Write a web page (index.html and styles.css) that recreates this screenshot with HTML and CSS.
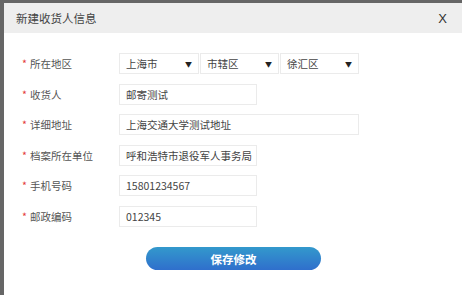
FILE: index.html
```html
<!DOCTYPE html>
<html lang="zh-CN">
<head>
    <meta charset="UTF-8">
    <title>新建收货人信息</title>
    <link rel="stylesheet" href="styles.css">
</head>
<body>
    <div class="modal">
        <div class="modal-header">
            <span class="modal-title">新建收货人信息</span>
            <span class="modal-close">X</span>
        </div>
        <form class="modal-body">
            <div class="form-row">
                <label><i>*</i>所在地区</label>
                <div class="selects">
                    <div class="select w80">上海市<b>▼</b></div>
                    <div class="select w78">市辖区<b>▼</b></div>
                    <div class="select w79">徐汇区<b>▼</b></div>
                </div>
            </div>
            <div class="form-row">
                <label><i>*</i>收货人</label>
                <div class="input short">邮寄测试</div>
            </div>
            <div class="form-row">
                <label><i>*</i>详细地址</label>
                <div class="input long">上海交通大学测试地址</div>
            </div>
            <div class="form-row">
                <label><i>*</i>档案所在单位</label>
                <div class="input short">呼和浩特市退役军人事务局</div>
            </div>
            <div class="form-row">
                <label><i>*</i>手机号码</label>
                <div class="input short">15801234567</div>
            </div>
            <div class="form-row">
                <label><i>*</i>邮政编码</label>
                <div class="input short">012345</div>
            </div>
            <div class="actions">
                <button type="button" class="save-button">保存修改</button>
            </div>
        </form>
    </div>
</body>
</html>
```

FILE: styles.css
```css
body, html {
    margin: 0;
    padding: 0;
    font-family: "Noto Sans CJK SC", "Noto Sans", sans-serif;
    background-color: #666666;
    height: 100%;
    overflow: hidden;
}
.modal {
    margin: 3px 0 0 4px;
    background-color: #ffffff;
    height: 100%;
}
.modal-header {
    background-color: #eeeeee;
    height: 30px;
    display: flex;
    align-items: center;
    justify-content: space-between;
    padding: 0 15px 0 12px;
    font-size: 11.5px;
    color: #444444;
}
.modal-close {
    font-family: "Liberation Sans", sans-serif;
    font-size: 13px;
    color: #333333;
}
.modal-body {
    padding: 20px 0 0 0;
}
.form-row {
    display: flex;
    align-items: center;
    height: 21px;
    margin-bottom: 9.6px;
}
.form-row label {
    width: 115px;
    padding-left: 18px;
    box-sizing: border-box;
    font-size: 10.5px;
    color: #555555;
}
.form-row label i {
    font-style: normal;
    color: #e4393c;
    margin-right: 3px;
}
.selects {
    display: flex;
    gap: 1px;
}
.select, .input {
    height: 21px;
    box-sizing: border-box;
    border: 1px solid #ebebeb;
    font-size: 10.5px;
    color: #444444;
    padding: 0 6px;
    display: flex;
    align-items: center;
    white-space: nowrap;
    overflow: hidden;
}
.select {
    justify-content: space-between;
}
.select b {
    font-size: 7px;
    font-weight: normal;
    color: #222222;
}
.w80 { width: 80px; }
.w78 { width: 79px; }
.w79 { width: 79px; }
.short { width: 138px; }
.long { width: 240px; }
.actions {
    padding-left: 142px;
    margin-top: 18px;
}
.save-button {
    width: 175px;
    height: 23px;
    border: none;
    border-radius: 12px;
    background: linear-gradient(#3399cc, #2f6fcc);
    color: #ffffff;
    font-family: "Noto Sans CJK SC", sans-serif;
    font-size: 11.5px;
    font-weight: bold;
    padding: 0;
    cursor: pointer;
}
```
